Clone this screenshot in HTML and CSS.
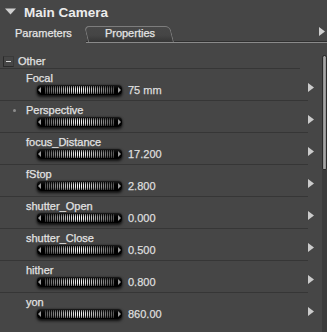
FILE: index.html
```html
<!DOCTYPE html>
<html>
<head>
<meta charset="utf-8">
<link rel="stylesheet" href="styles.css">
</head>
<body>
<div class="app">
  <div class="header">
    <svg class="disclosure" width="11" height="7" viewBox="0 0 11 7"><polygon points="0,0.5 11,0.5 5.5,6.5"/></svg>
    <span class="title">Main Camera</span>
  </div>
  <div class="tabbar">
    <div class="tab active">Parameters</div>
    <div class="tabrest">
      <div class="tab inactive"><span class="tabtext">Properties</span></div>
      <svg class="tabarrow" width="6" height="9" viewBox="0 0 6 9"><polygon points="0,0 6,4.5 0,9"/></svg>
    </div>
  </div>
  <div class="panel">
    <div class="content">
      <div class="group">
        <span class="box"><span class="minus"></span></span>
        <span class="grouptitle">Other</span>
      </div>

      <div class="row">
        <div class="main">
          <div class="label">Focal</div>
          <div class="control">
            <div class="slider"><span class="al"></span><span class="ridges"></span><span class="ar"></span></div>
            <span class="value">75 mm</span>
          </div>
        </div>
        <div class="go"><svg width="6" height="9" viewBox="0 0 6 9"><polygon points="0,0 6,4.5 0,9"/></svg></div>
      </div>

      <div class="row">
        <div class="main">
          <div class="label dotted"><span class="dot"></span>Perspective</div>
          <div class="control">
            <div class="slider"><span class="al"></span><span class="ridges"></span><span class="ar"></span></div>
          </div>
        </div>
        <div class="go"><svg width="6" height="9" viewBox="0 0 6 9"><polygon points="0,0 6,4.5 0,9"/></svg></div>
      </div>

      <div class="row">
        <div class="main">
          <div class="label">focus_Distance</div>
          <div class="control">
            <div class="slider"><span class="al"></span><span class="ridges"></span><span class="ar"></span></div>
            <span class="value">17.200</span>
          </div>
        </div>
        <div class="go"><svg width="6" height="9" viewBox="0 0 6 9"><polygon points="0,0 6,4.5 0,9"/></svg></div>
      </div>

      <div class="row">
        <div class="main">
          <div class="label">fStop</div>
          <div class="control">
            <div class="slider"><span class="al"></span><span class="ridges"></span><span class="ar"></span></div>
            <span class="value">2.800</span>
          </div>
        </div>
        <div class="go"><svg width="6" height="9" viewBox="0 0 6 9"><polygon points="0,0 6,4.5 0,9"/></svg></div>
      </div>

      <div class="row">
        <div class="main">
          <div class="label">shutter_Open</div>
          <div class="control">
            <div class="slider"><span class="al"></span><span class="ridges"></span><span class="ar"></span></div>
            <span class="value">0.000</span>
          </div>
        </div>
        <div class="go"><svg width="6" height="9" viewBox="0 0 6 9"><polygon points="0,0 6,4.5 0,9"/></svg></div>
      </div>

      <div class="row">
        <div class="main">
          <div class="label">shutter_Close</div>
          <div class="control">
            <div class="slider"><span class="al"></span><span class="ridges"></span><span class="ar"></span></div>
            <span class="value">0.500</span>
          </div>
        </div>
        <div class="go"><svg width="6" height="9" viewBox="0 0 6 9"><polygon points="0,0 6,4.5 0,9"/></svg></div>
      </div>

      <div class="row">
        <div class="main">
          <div class="label">hither</div>
          <div class="control">
            <div class="slider"><span class="al"></span><span class="ridges"></span><span class="ar"></span></div>
            <span class="value">0.800</span>
          </div>
        </div>
        <div class="go"><svg width="6" height="9" viewBox="0 0 6 9"><polygon points="0,0 6,4.5 0,9"/></svg></div>
      </div>

      <div class="row">
        <div class="main">
          <div class="label">yon</div>
          <div class="control">
            <div class="slider"><span class="al"></span><span class="ridges"></span><span class="ar"></span></div>
            <span class="value">860.00</span>
          </div>
        </div>
        <div class="go"><svg width="6" height="9" viewBox="0 0 6 9"><polygon points="0,0 6,4.5 0,9"/></svg></div>
      </div>
    </div>
    <div class="scroll">
      <div class="thumb"></div>
      <div class="track"></div>
    </div>
  </div>
</div>
</body>
</html>
```

FILE: styles.css
```css
html, body {
  margin: 0;
  padding: 0;
}
body {
  background: #464646;
  font-family: "Liberation Sans", Arial, sans-serif;
  font-size: 11px;
  color: #e2e2e2;
  overflow: hidden;
  -webkit-text-stroke: 0.25px;
}
.app {
  width: 327px;
  height: 332px;
  display: flex;
  flex-direction: column;
}

/* header */
.header {
  height: 25px;
  display: flex;
  align-items: center;
  box-sizing: border-box;
}
.disclosure {
  margin-left: 5px;
  margin-top: -2px;
  fill: #cfcfcf;
}
.title {
  margin-left: 8px;
  font-size: 13.5px;
  font-weight: bold;
  line-height: 25px;
  color: #ececec;
  -webkit-text-stroke: 0;
}

/* tabs */
.tabbar {
  height: 18px;
  display: flex;
}
.tab {
  line-height: 13px;
  color: #e4e4e4;
}
.tab.active {
  width: 86px;
  box-sizing: border-box;
  padding: 2px 0 0 15px;
}
.tabrest {
  flex: 1;
  height: 18px;
  box-sizing: border-box;
  display: flex;
  align-items: flex-start;
  border-bottom: 1px solid #8a8a8a;
  box-shadow: inset 0 -1px 0 #2f2f2f;
}
.tab.inactive {
  width: 86px;
  height: 16px;
  margin-top: 1px;
  box-sizing: border-box;
  border: 1px solid #7d7d7d;
  border-bottom: none;
  border-radius: 5px 5px 0 0;
  background: linear-gradient(to bottom, #484848 0%, #454545 55%, #363636 100%);
  transform: skewX(14deg);
  text-align: center;
}
.tabtext {
  display: inline-block;
  transform: skewX(-14deg);
  margin-left: 3px;
}
.tabarrow {
  margin-left: auto;
  margin-right: 2px;
  margin-top: 2px;
  fill: #cfcfcf;
}

/* panel */
.panel {
  flex: 1;
  display: flex;
  min-height: 0;
}
.content {
  width: 321px;
}
.scroll {
  width: 6px;
  display: flex;
  flex-direction: column;
  padding-top: 12px;
  box-sizing: border-box;
}
.thumb {
  height: 115px;
  margin-left: 1px;
  width: 5px;
  box-sizing: border-box;
  border: 1px solid #2a2a2a;
  border-radius: 3px 3px 2px 2px;
  background: linear-gradient(to right, #8a8a8a, #a6a6a6 50%, #8a8a8a);
}
.track {
  flex: 1;
  margin-left: 1px;
  width: 5px;
  background: #3b3b3b;
}

.group {
  width: 300px;
  height: 26px;
  box-sizing: border-box;
  padding-top: 12px;
  display: flex;
  align-items: flex-start;
  border-bottom: 1px solid #363636;
  line-height: 13px;
}
.box {
  width: 11px;
  height: 11px;
  margin-left: 3px;
  margin-top: 1px;
  box-sizing: border-box;
  border: 1px solid #2a2a2a;
  border-top-color: #3a3a3a;
  border-right-color: #3a3a3a;
  display: flex;
  align-items: center;
  justify-content: center;
}
.minus {
  width: 5px;
  height: 1px;
  background: #d8d8d8;
}
.grouptitle {
  margin-left: 4px;
  color: #e2e2e2;
}

/* rows */
.row {
  height: 32px;
  display: flex;
}
.main {
  width: 308px;
  box-sizing: border-box;
  padding-top: 3px;
  border-bottom: 1px solid #363636;
}
.row:last-child .main {
  border-bottom: none;
}
.label {
  line-height: 13px;
  padding-left: 26px;
  display: flex;
  align-items: center;
  color: #e2e2e2;
}
.label.dotted {
  padding-left: 13px;
}
.dot {
  width: 3px;
  height: 3px;
  border-radius: 50%;
  background: #8c8c8c;
  margin-right: 10px;
}
.control {
  height: 10px;
  display: flex;
  align-items: center;
  padding-left: 37px;
}
.value {
  margin-left: 6px;
  line-height: 10px;
  color: #dedede;
}
.go {
  flex: 1;
}
.go svg {
  display: block;
  margin-top: 14px;
  fill: #cbcbcb;
}

/* slider */
.slider {
  width: 85px;
  height: 10px;
  box-sizing: border-box;
  display: flex;
  align-items: center;
  background: linear-gradient(to bottom, #1a1a1a, #000 40%, #000);
  border-radius: 4px;
  box-shadow: 0 2px 3px rgba(0, 0, 0, 0.75), 0 0 2px rgba(0, 0, 0, 0.6);
}
.al, .ar {
  width: 0;
  height: 0;
  border-top: 3px solid transparent;
  border-bottom: 3px solid transparent;
}
.al {
  margin-left: 1px;
  border-right: 3px solid #9a9a9a;
}
.ar {
  margin-right: 1px;
  border-left: 3px solid #9a9a9a;
}
.ridges {
  flex: 1;
  height: 8px;
  margin: 0 4px;
  background:
    linear-gradient(to bottom, rgba(0,0,0,0.55), rgba(0,0,0,0) 35%, rgba(0,0,0,0) 65%, rgba(0,0,0,0.55)),
    repeating-linear-gradient(90deg, rgba(0,0,0,0) 0 1px, #0d0d0d 1px 2px),
    linear-gradient(90deg, #555555, #a8a8a8 25%, #ffffff 50%, #a8a8a8 75%, #555555);
}
```
